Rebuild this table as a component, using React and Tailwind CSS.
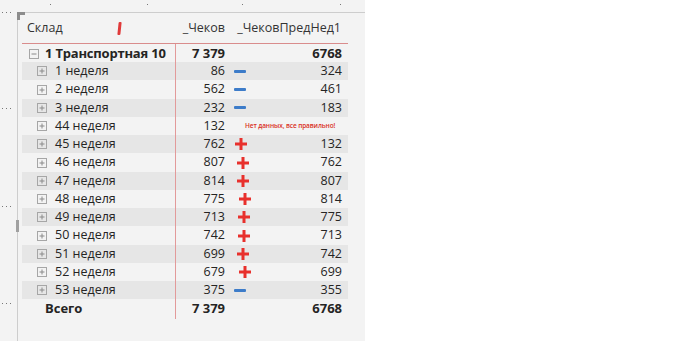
import React from 'react';

const weeks = [
  { name: '1 неделя', cnt: '86', prev: '324', mark: 'minus' },
  { name: '2 неделя', cnt: '562', prev: '461', mark: 'minus' },
  { name: '3 неделя', cnt: '232', prev: '183', mark: 'minus' },
  { name: '44 неделя', cnt: '132', prev: '', mark: 'note' },
  { name: '45 неделя', cnt: '762', prev: '132', mark: 'plus', shift: 'ml-[3px]' },
  { name: '46 неделя', cnt: '807', prev: '762', mark: 'plus', shift: 'ml-[5px]' },
  { name: '47 неделя', cnt: '814', prev: '807', mark: 'plus', shift: 'ml-[5px]' },
  { name: '48 неделя', cnt: '775', prev: '814', mark: 'plus', shift: 'ml-[7px]' },
  { name: '49 неделя', cnt: '713', prev: '775', mark: 'plus', shift: 'ml-[6px]' },
  { name: '50 неделя', cnt: '742', prev: '713', mark: 'plus', shift: 'ml-[6px]' },
  { name: '51 неделя', cnt: '699', prev: '742', mark: 'plus', shift: 'ml-[5px]' },
  { name: '52 неделя', cnt: '679', prev: '699', mark: 'plus', shift: 'ml-[7px]' },
  { name: '53 неделя', cnt: '375', prev: '355', mark: 'minus' },
];

function Box({ minus }) {
  return (
    <svg width="10" height="10" viewBox="0 0 10 10" className="shrink-0">
      <rect x="0.5" y="0.5" width="9" height="9" fill="none" stroke="#a6a6a6" />
      <path d="M2.5 5h5" stroke="#8a8a8a" />
      {!minus && <path d="M5 2.5v5" stroke="#8a8a8a" />}
    </svg>
  );
}

function Mark({ type, shift }) {
  if (type === 'minus') {
    return <div className="ml-[3px] w-[12px] h-[3px] rounded-[1px] bg-[#3d7cc9]" />;
  }
  if (type === 'plus') {
    return (
      <svg width="14" height="14" viewBox="0 0 14 14" className={shift}>
        <path d="M7 1v12M1 7h12" stroke="#e8302c" strokeWidth="3" />
      </svg>
    );
  }
  return null;
}

function Dots() {
  return (
    <>
      <span className="w-px h-px bg-[#777]" />
      <span className="w-px h-px bg-[#777]" />
      <span className="w-px h-px bg-[#777]" />
    </>
  );
}

export default function App() {
  return (
    <div className="flex w-[687px] h-[341px] bg-white font-['Open_Sans',sans-serif] text-[12.5px] text-[#252423]">
      <div className="relative w-[365px] h-full bg-[#f3f3f3] pt-[12px] pl-[17px]">
        {/* tiny guide dots */}
        <div className="absolute left-[2px] top-[12px] flex gap-[3px]"><Dots /></div>
        <div className="absolute left-[2px] top-[108px] flex gap-[3px]"><Dots /></div>
        <div className="absolute left-[2px] top-[206px] flex gap-[3px]"><Dots /></div>
        <div className="absolute left-[2px] top-[303px] flex gap-[3px]"><Dots /></div>
        <span className="absolute left-[50px] top-[4px] w-px h-px bg-[#777]" />
        <span className="absolute left-[147px] top-[4px] w-px h-px bg-[#777]" />
        <span className="absolute left-[242px] top-[4px] w-px h-px bg-[#777]" />
        <span className="absolute left-[340px] top-[4px] w-px h-px bg-[#777]" />
        {/* corner and scroll handle */}
        <div className="absolute left-[17px] top-[12px] w-[8px] h-[8px] border-l-[3px] border-t-[3px] border-[#8c8c8c]" />
        <div className="absolute left-[16px] top-[220px] w-[3px] h-[12px] bg-[#a0a0a0]" />

        <div className="h-full border-l border-t border-[#cdcdcd] pl-[4px]">
          <div className="w-[326px]">
            {/* header */}
            <div className="grid grid-cols-[154px_55px_117px] h-[31px] items-center border-b border-[#d98c8c] text-[#333]">
              <div className="flex items-center pl-[5px]">
                <span>Склад</span>
                <span className="ml-[55px] w-[3px] h-[13px] bg-[#e03a3a] rounded-[1px] skew-x-[-6deg]" />
              </div>
              <div className="text-right pr-[6px]">_Чеков</div>
              <div className="text-right pr-[7px]">_ЧековПредНед1</div>
            </div>

            {/* group row */}
            <div className="grid grid-cols-[154px_55px_117px] h-[18px] items-center font-bold text-[13px]">
              <div className="flex items-center h-full gap-[6px] pl-[7px] shadow-[inset_-1px_0_0_#e29a9a]">
                <Box minus />
                <span className="tracking-[-0.2px]">1 Транспортная 10</span>
              </div>
              <div className="text-right pr-[6px]">7 379</div>
              <div className="text-right pr-[6px]">6768</div>
            </div>

            {weeks.map((w, i) => (
              <div
                key={w.name}
                className={`grid grid-cols-[154px_55px_117px] h-[18.25px] items-center ${i % 2 === 0 ? 'bg-[#e6e6e6]' : ''}`}
              >
                <div className="flex items-center h-full gap-[8px] pl-[15px] shadow-[inset_-1px_0_0_#e29a9a]">
                  <Box />
                  <span>{w.name}</span>
                </div>
                <div className="text-right pr-[6px]">{w.cnt}</div>
                <div className="flex items-center justify-between pr-[6px]">
                  {w.mark === 'note' ? (
                    <span className="ml-[14px] whitespace-nowrap text-[6.5px] font-semibold text-[#d93025] tracking-[-0.1px]">Нет данных, все правильно!</span>
                  ) : (
                    <>
                      <Mark type={w.mark} shift={w.shift} />
                      <span>{w.prev}</span>
                    </>
                  )}
                </div>
              </div>
            ))}

            {/* total */}
            <div className="grid grid-cols-[154px_55px_117px] h-[19px] items-center font-bold text-[13px]">
              <div className="h-full flex items-center pl-[23px] shadow-[inset_-1px_0_0_#e29a9a]">Всего</div>
              <div className="text-right pr-[6px]">7 379</div>
              <div className="text-right pr-[6px]">6768</div>
            </div>
          </div>
        </div>
      </div>
    </div>
  );
}
